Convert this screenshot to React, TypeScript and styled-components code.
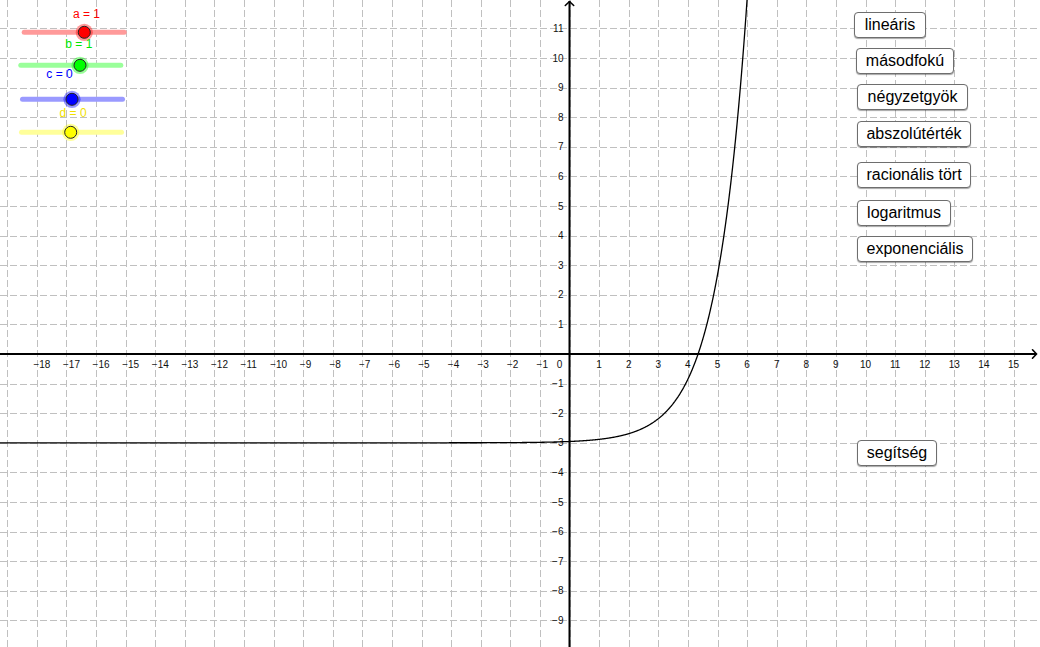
import React from 'react';
import styled, { createGlobalStyle } from 'styled-components';

const W = 1040;
const H = 647;
const OX = 569.5;
const OY = 354;
const U = 29.6;

const px = (x: number) => OX + x * U;
const py = (y: number) => OY - y * U;

const GlobalStyle = createGlobalStyle`
  html, body { margin: 0; padding: 0; background: #fff; }
  body { font-family: "Liberation Sans", Arial, sans-serif; overflow: hidden; }
`;

const Applet = styled.div`
  position: relative;
  width: ${W}px;
  height: ${H}px;
  overflow: hidden;
  background: #fff;
`;

const Canvas = styled.svg`
  display: block;
`;

const GridLine = styled.line`
  stroke: #c0c0c0;
  stroke-width: 1;
  stroke-dasharray: 7 3;
`;

const AxisLine = styled.line`
  stroke: #000;
  stroke-width: 2;
`;

const ArrowHead = styled.polyline`
  fill: none;
  stroke: #000;
  stroke-width: 1.6;
  stroke-linecap: round;
  stroke-linejoin: miter;
`;

const AxisLabel = styled.text`
  font-family: "Liberation Sans", Arial, sans-serif;
  font-size: 10px;
  fill: #111;
`;

const Curve = styled.path`
  fill: none;
  stroke: #000;
  stroke-width: 1.3;
`;

const SliderTrack = styled.line<{ $color: string }>`
  stroke: ${(p) => p.$color};
  stroke-width: 5;
  stroke-linecap: round;
`;

const KnobHalo = styled.circle<{ $color: string }>`
  fill: ${(p) => p.$color};
  opacity: 0.4;
`;

const Knob = styled.circle<{ $color: string }>`
  fill: ${(p) => p.$color};
  stroke: #222;
  stroke-width: 1;
`;

const SliderLabel = styled.text<{ $color: string }>`
  font-family: "Liberation Sans", Arial, sans-serif;
  font-size: 12px;
  fill: ${(p) => p.$color};
`;

const ToolButton = styled.button<{ $x: number; $y: number; $w: number }>`
  position: absolute;
  left: ${(p) => p.$x}px;
  top: ${(p) => p.$y}px;
  width: ${(p) => p.$w}px;
  height: 26px;
  box-sizing: border-box;
  margin: 0;
  padding: 0;
  display: flex;
  align-items: center;
  justify-content: center;
  font-family: "Liberation Sans", Arial, sans-serif;
  font-size: 16px;
  line-height: 1;
  color: #000;
  white-space: nowrap;
  background: #fff;
  border: 1px solid #6e6e6e;
  border-radius: 4px;
  box-shadow: 0 1px 1px rgba(0, 0, 0, 0.35);
  cursor: pointer;
`;

const f = (x: number) => 0.0442 * Math.exp(0.971 * x) - 3;

function curvePath(): string {
  const pts: string[] = [];
  let first = true;
  for (let x = -19.5; x <= 6.2; x += 0.01) {
    const X = px(x);
    const Y = py(f(x));
    pts.push(`${first ? 'M' : 'L'}${X.toFixed(2)},${Y.toFixed(2)}`);
    first = false;
    if (Y < -2) break;
  }
  return pts.join(' ');
}

type SliderProps = {
  x1: number;
  x2: number;
  y: number;
  knob: number;
  track: string;
  color: string;
  labelColor: string;
  label: string;
  lx: number;
  ly: number;
};

const Slider: React.FC<SliderProps> = ({ x1, x2, y, knob, track, color, labelColor, label, lx, ly }) => (
  <g>
    <SliderTrack x1={x1} y1={y} x2={x2} y2={y} $color={track} />
    <KnobHalo cx={knob} cy={y} r={8.6} $color={color} />
    <Knob cx={knob} cy={y} r={6} $color={color} />
    <SliderLabel x={lx} y={ly} $color={labelColor}>
      {label}
    </SliderLabel>
  </g>
);

const MINUS = '\u2212';

const Graph: React.FC = () => {
  const xs: number[] = [];
  for (let i = -20; i <= 16; i++) {
    const X = px(i);
    if (X >= 0 && X <= W) xs.push(i);
  }
  const ys: number[] = [];
  for (let j = -11; j <= 12; j++) {
    const Y = py(j);
    if (Y >= 0 && Y <= H) ys.push(j);
  }

  return (
    <Canvas width={W} height={H} viewBox={`0 0 ${W} ${H}`}>
      {xs.map((i) => (
        <GridLine key={`gx${i}`} x1={Math.round(px(i)) + 0.5} y1={0} x2={Math.round(px(i)) + 0.5} y2={H} />
      ))}
      {ys.map((j) => (
        <GridLine key={`gy${j}`} x1={0} y1={Math.round(py(j)) + 0.5} x2={W} y2={Math.round(py(j)) + 0.5} />
      ))}

      <AxisLine x1={0} y1={OY} x2={1036} y2={OY} />
      <AxisLine x1={OX} y1={H} x2={OX} y2={1} />
      <ArrowHead points={`1032.5,349.8 1036.5,354 1032.5,358.2`} />
      <ArrowHead points={`565.3,5.5 569.5,1.5 573.7,5.5`} />

      {xs
        .filter((i) => i !== 0 && i >= -18 && i <= 15)
        .map((i) =>
          i < 0 ? (
            <AxisLabel key={`lx${i}`} x={px(i) - 3.3} y={367.5} textAnchor="start">
              {MINUS + Math.abs(i)}
            </AxisLabel>
          ) : (
            <AxisLabel key={`lx${i}`} x={px(i)} y={367.5} textAnchor="middle">
              {String(i)}
            </AxisLabel>
          )
        )}
      <AxisLabel x={559.5} y={367.5} textAnchor="middle">
        0
      </AxisLabel>
      {ys
        .filter((j) => j !== 0 && j >= -9 && j <= 11)
        .map((j) => (
          <AxisLabel key={`ly${j}`} x={563.5} y={py(j) + 3.6} textAnchor="end">
            {j < 0 ? MINUS + Math.abs(j) : String(j)}
          </AxisLabel>
        ))}

      <Curve d={curvePath()} />

      <Slider x1={24.2} x2={124.2} y={32.3} knob={84.3} track="#ff9a9a" color="#ff0000" labelColor="#ff0000" label="a = 1" lx={73} ly={17.5} />
      <Slider x1={20.8} x2={120.8} y={65.3} knob={80} track="#9aff9a" color="#00ff00" labelColor="#00e600" label="b = 1" lx={65.3} ly={48.4} />
      <Slider x1={22.5} x2={122.5} y={99.3} knob={72} track="#9a9aff" color="#0000ff" labelColor="#0000ff" label="c = 0" lx={46.3} ly={77.7} />
      <Slider x1={21.5} x2={121.5} y={132.3} knob={70.7} track="#ffff9a" color="#ffff00" labelColor="#f0e000" label="d = 0" lx={59.6} ly={117.3} />
    </Canvas>
  );
};

const buttons: { label: string; x: number; y: number; w: number }[] = [
  { label: 'lineáris', x: 854, y: 12, w: 72 },
  { label: 'másodfokú', x: 856, y: 48, w: 98 },
  { label: 'négyzetgyök', x: 857, y: 84, w: 111 },
  { label: 'abszolútérték', x: 857, y: 121, w: 114 },
  { label: 'racionális tört', x: 857, y: 162, w: 114 },
  { label: 'logaritmus', x: 857, y: 200, w: 94 },
  { label: 'exponenciális', x: 857, y: 236, w: 116 },
  { label: 'segítség', x: 857, y: 440, w: 80 },
];

export default function App() {
  return (
    <>
      <GlobalStyle />
      <Applet>
        <Graph />
        {buttons.map((b) => (
          <ToolButton key={b.label} $x={b.x} $y={b.y} $w={b.w}>
            {b.label}
          </ToolButton>
        ))}
      </Applet>
    </>
  );
}
